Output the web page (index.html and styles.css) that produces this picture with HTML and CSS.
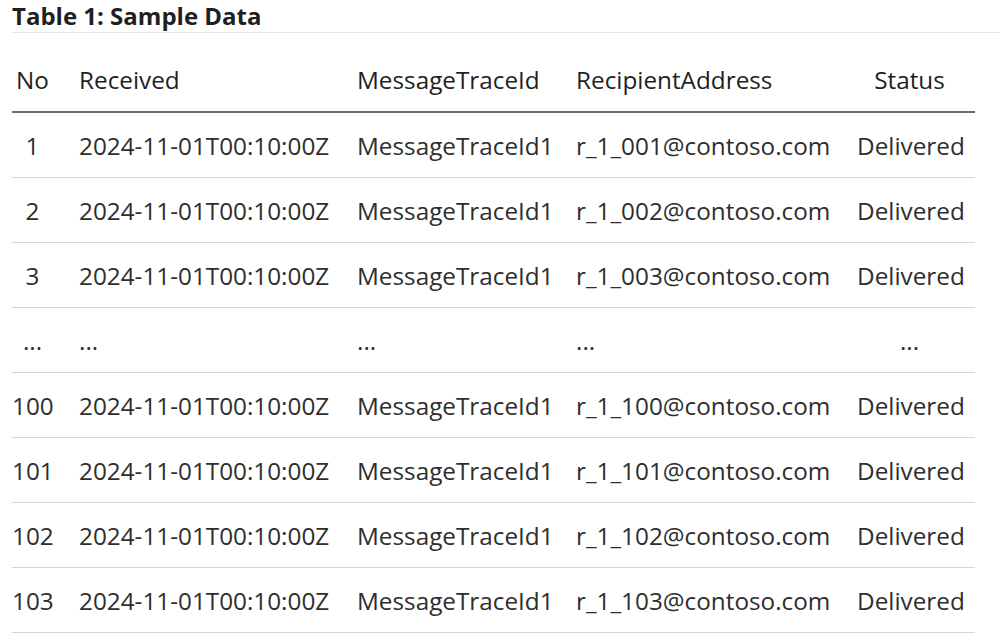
FILE: index.html
```html
<!DOCTYPE html>
<html>
<head>
<meta charset="utf-8">
<link rel="stylesheet" href="styles.css">
</head>
<body>
<div class="page">
  <h3 class="caption">Table 1: Sample Data</h3>
  <table class="data">
    <colgroup>
      <col class="c-no"><col class="c-rec"><col class="c-id"><col class="c-addr"><col class="c-status">
    </colgroup>
    <thead>
      <tr><th class="no">No</th><th>Received</th><th>MessageTraceId</th><th>RecipientAddress</th><th class="status">Status</th></tr>
    </thead>
    <tbody>
      <tr><td class="no">1</td><td>2024-11-01T00:10:00Z</td><td>MessageTraceId1</td><td>r_1_001@contoso.com</td><td class="status">Delivered</td></tr>
      <tr><td class="no">2</td><td>2024-11-01T00:10:00Z</td><td>MessageTraceId1</td><td>r_1_002@contoso.com</td><td class="status">Delivered</td></tr>
      <tr><td class="no">3</td><td>2024-11-01T00:10:00Z</td><td>MessageTraceId1</td><td>r_1_003@contoso.com</td><td class="status">Delivered</td></tr>
      <tr class="gap"><td class="no">...</td><td>...</td><td>...</td><td>...</td><td class="status">...</td></tr>
      <tr><td class="no">100</td><td>2024-11-01T00:10:00Z</td><td>MessageTraceId1</td><td>r_1_100@contoso.com</td><td class="status">Delivered</td></tr>
      <tr><td class="no">101</td><td>2024-11-01T00:10:00Z</td><td>MessageTraceId1</td><td>r_1_101@contoso.com</td><td class="status">Delivered</td></tr>
      <tr><td class="no">102</td><td>2024-11-01T00:10:00Z</td><td>MessageTraceId1</td><td>r_1_102@contoso.com</td><td class="status">Delivered</td></tr>
      <tr><td class="no">103</td><td>2024-11-01T00:10:00Z</td><td>MessageTraceId1</td><td>r_1_103@contoso.com</td><td class="status">Delivered</td></tr>
    </tbody>
  </table>
</div>
</body>
</html>
```
FILE: styles.css
```css
html, body {
  margin: 0;
  padding: 0;
  background: #ffffff;
}
.page {
  padding: 0 0 0 12px;
  font-family: "Open Sans", "Noto Sans", sans-serif;
  color: #262626;
}
.caption {
  margin: 0;
  height: 33px;
  box-sizing: border-box;
  padding-top: 0;
  font-size: 24px;
  line-height: 32px;
  font-weight: 700;
  color: #1f1f1f;
  border-bottom: 1px solid #e6e6e6;
}
.data {
  border-collapse: collapse;
  table-layout: fixed;
  width: 963px;
  margin-top: 15px;
  font-size: 24.3px;
}
.c-no { width: 54px; }
.c-rec { width: 278px; }
.c-id { width: 219px; }
.c-addr { width: 281px; }
.c-status { width: 131px; }
.data th, .data td {
  padding: 0 13px;
  text-align: left;
  white-space: nowrap;
  font-weight: 400;
}
.data th {
  height: 63px;
  color: #1f1f1f;
  border-bottom: 2px solid #6b6b6b;
}
.data td {
  height: 64px;
  color: #2e2e2e;
  border-bottom: 1.5px solid #d6d6d6;
}
.data .no {
  padding-left: 0;
  text-align: center;
}
.data .status {
  text-align: center;
}
```
